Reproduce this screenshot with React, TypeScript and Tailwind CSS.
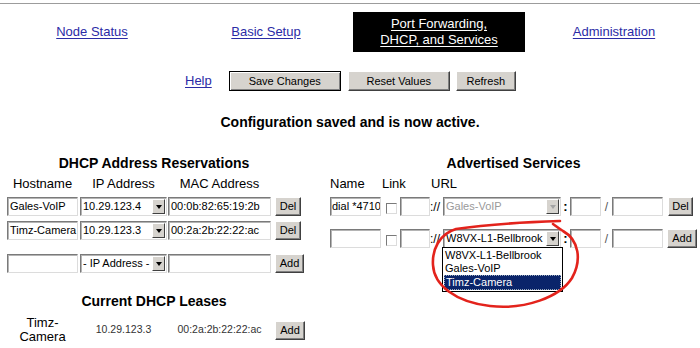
import React from 'react';

const linkCls = 'text-[#2b2ba6] underline underline-offset-[2px]';

function Button({ children, className = '', isDefault = false }: { children: React.ReactNode; className?: string; isDefault?: boolean }) {
  const edge = isDefault
    ? 'border border-black shadow-[inset_1px_1px_0_#fff,inset_-1px_-1px_0_#808080]'
    : 'border border-t-white border-l-white border-r-[#404040] border-b-[#404040] shadow-[inset_-1px_-1px_0_#808080]';
  return (
    <div className={`flex shrink-0 items-center justify-center bg-[#d6d3ce] text-[11px] leading-none text-black ${edge} ${className}`}>
      {children}
    </div>
  );
}

function TextBox({ value = '', className = '' }: { value?: string; className?: string }) {
  return (
    <div
      className={`flex h-[19px] shrink-0 items-center overflow-hidden whitespace-nowrap border border-t-[#7a7a7a] border-l-[#7a7a7a] border-r-[#dcdcdc] border-b-[#dcdcdc] bg-white px-[2px] text-[11px] leading-none text-black shadow-[inset_1px_1px_0_#b4b4b4] ${className}`}
    >
      {value}
    </div>
  );
}

function Arrow({ disabled = false }: { disabled?: boolean }) {
  return (
    <div className="flex h-[15px] w-[13px] shrink-0 items-center justify-center border border-t-white border-l-white border-r-[#404040] border-b-[#404040] bg-[#d6d3ce]">
      <div
        className={`h-0 w-0 border-x-[3.5px] border-t-[4px] border-x-transparent ${disabled ? 'border-t-[#a4a4a4]' : 'border-t-black'}`}
      />
    </div>
  );
}

function Select({
  value,
  className = '',
  disabled = false,
  children,
}: {
  value: string;
  className?: string;
  disabled?: boolean;
  children?: React.ReactNode;
}) {
  return (
    <div
      className={`relative flex h-[19px] shrink-0 items-center border border-t-[#7a7a7a] border-l-[#7a7a7a] border-r-[#dcdcdc] border-b-[#dcdcdc] bg-white pl-[2px] pr-[1px] shadow-[inset_1px_1px_0_#b4b4b4] ${className}`}
    >
      <span className={`flex-1 overflow-hidden whitespace-nowrap text-[11px] leading-none ${disabled ? 'text-[#9a9a9a]' : 'text-black'}`}>
        {value}
      </span>
      <Arrow disabled={disabled} />
      {children}
    </div>
  );
}

function CheckBox() {
  return <div className="mb-[2px] h-[11px] w-[11px] shrink-0 self-end border border-t-[#7a7a7a] border-l-[#7a7a7a] border-r-[#dcdcdc] border-b-[#dcdcdc] bg-white" />;
}

const urlOptions = ['W8VX-L1-Bellbrook', 'Gales-VoIP', 'Timz-Camera'];

export default function App() {
  return (
    <div className="relative h-[348px] w-[700px] overflow-hidden bg-white pt-[3px] font-['Liberation_Sans',Arial,sans-serif] text-black">
      <div className="h-[1px] bg-[#9c9c9c]" />

      {/* top nav */}
      <div className="ml-[5px] mt-[8px] grid h-[40px] grid-cols-[repeat(4,174px)] text-[13px] leading-[16px]">
        <div className="flex items-center justify-center">
          <a className={linkCls}>Node Status</a>
        </div>
        <div className="flex items-center justify-center">
          <a className={linkCls}>Basic Setup</a>
        </div>
        <div className="flex items-center">
          <div className="flex h-[40px] w-[172px] flex-col items-center justify-center bg-black text-center text-white">
            <span className="underline underline-offset-[2px]">Port Forwarding,</span>
            <span className="underline underline-offset-[2px]">DHCP, and Services</span>
          </div>
        </div>
        <div className="flex items-center justify-center">
          <a className={linkCls}>Administration</a>
        </div>
      </div>

      {/* action buttons */}
      <div className="ml-[185px] mt-[19px] flex h-[20px] items-center">
        <a className={`${linkCls} text-[13px]`}>Help</a>
        <Button isDefault className="ml-[17px] h-[20px] w-[112px]">Save Changes</Button>
        <Button className="ml-[7px] h-[20px] w-[102px]">Reset Values</Button>
        <Button className="ml-[6px] h-[20px] w-[60px]">Refresh</Button>
      </div>

      <p className="mt-[23px] text-center text-[14px] font-bold leading-[16px]">Configuration saved and is now active.</p>

      <div className="mt-[25px] flex">
        {/* DHCP reservations + leases */}
        <div className="ml-[7px] w-[298px]">
          <div className="pr-[4px] text-center text-[14px] font-bold leading-[16px]">DHCP Address Reservations</div>
          <div className="mt-[5px] flex text-[13px] leading-[16px]">
            <div className="mr-[2px] w-[71px] text-center">Hostname</div>
            <div className="mr-[1px] w-[87px] text-center">IP Address</div>
            <div className="w-[103px] text-center">MAC Address</div>
          </div>

          <div className="mt-[5px] flex items-center">
            <TextBox value="Gales-VoIP" className="mr-[2px] w-[71px]" />
            <Select value="10.29.123.4" className="mr-[1px] w-[87px]" />
            <TextBox value="00:0b:82:65:19:2b" className="mr-[4px] w-[103px]" />
            <Button className="h-[19px] w-[26px]">Del</Button>
          </div>
          <div className="mt-[5px] flex items-center">
            <TextBox value="Timz-Camera" className="mr-[2px] w-[71px]" />
            <Select value="10.29.123.3" className="mr-[1px] w-[87px]" />
            <TextBox value="00:2a:2b:22:22:ac" className="mr-[4px] w-[103px]" />
            <Button className="h-[19px] w-[26px]">Del</Button>
          </div>
          <div className="mt-[14px] flex items-center">
            <TextBox className="mr-[2px] w-[71px]" />
            <Select value="- IP Address -" className="mr-[1px] w-[87px]" />
            <TextBox className="mr-[4px] w-[103px]" />
            <Button className="h-[19px] w-[29px]">Add</Button>
          </div>

          <div className="mt-[20px] pr-[4px] text-center text-[14px] font-bold leading-[16px]">Current DHCP Leases</div>
          <div className="mt-[7px] flex items-center">
            <div className="flex w-[71px] flex-col items-center text-[13px] leading-[14px]">
              <span>Timz-</span>
              <span>Camera</span>
            </div>
            <div className="ml-[2px] w-[87px] text-center text-[10.5px] text-[#333]">10.29.123.3</div>
            <div className="ml-[1px] w-[103px] text-center text-[10.5px] text-[#333]">00:2a:2b:22:22:ac</div>
            <Button className="ml-[4px] h-[19px] w-[30px]">Add</Button>
          </div>
        </div>

        {/* advertised services */}
        <div className="ml-[25px] w-[367px]">
          <div className="text-center text-[14px] font-bold leading-[16px]">Advertised Services</div>
          <div className="mt-[5px] flex text-[13px] leading-[16px]">
            <div className="w-[52px]">Name</div>
            <div className="w-[49px]">Link</div>
            <div>URL</div>
          </div>

          <div className="mt-[5px] flex h-[19px] items-center">
            <TextBox value="dial *4710" className="w-[51px] !px-[1px]" />
            <div className="ml-[5px] flex h-[19px]">
              <CheckBox />
            </div>
            <TextBox className="ml-[3px] w-[30px]" />
            <span className="w-[13px] text-[12px] leading-none">://</span>
            <Select value="Gales-VoIP" disabled className="w-[118px]" />
            <span className="w-[9px] text-center text-[13px] font-bold leading-none">:</span>
            <TextBox className="w-[31px]" />
            <span className="w-[11px] text-center text-[12px] leading-none text-[#555]">/</span>
            <TextBox className="w-[51px]" />
            <Button className="ml-[5px] h-[19px] w-[25px]">Del</Button>
          </div>

          <div className="mt-[13px] flex h-[19px] items-center">
            <TextBox className="w-[51px]" />
            <div className="ml-[5px] flex h-[19px]">
              <CheckBox />
            </div>
            <TextBox className="ml-[3px] w-[30px]" />
            <span className="w-[13px] text-[12px] leading-none">://</span>
            <Select value="W8VX-L1-Bellbrook" className="w-[118px]">
              <div className="absolute left-[-2px] top-[17px] z-10 w-[121px] border border-black bg-white py-[1px] text-[11px] leading-[13px]">
                {urlOptions.map((o) => (
                  <div
                    key={o}
                    className={
                      o === 'Timz-Camera'
                        ? 'mx-[1px] border border-dotted border-[#9ab] bg-[#0a246a] px-[1px] text-white'
                        : 'px-[2px] text-black'
                    }
                  >
                    {o}
                  </div>
                ))}
              </div>
            </Select>
            <span className="w-[9px] text-center text-[13px] font-bold leading-none">:</span>
            <TextBox className="w-[31px]" />
            <span className="w-[11px] text-center text-[12px] leading-none text-[#555]">/</span>
            <TextBox className="w-[51px]" />
            <Button className="ml-[4px] h-[19px] w-[30px]">Add</Button>
          </div>
        </div>
      </div>

      {/* hand-drawn annotation */}
      <svg className="pointer-events-none absolute left-0 top-0 z-20" width="700" height="348" viewBox="0 0 700 348">
        <path
          d="M560 221 C530 222, 482 225, 456 229 C439 234, 432 250, 433 265 C434 285, 455 302, 490 306 C525 310, 560 297, 572 278 C582 260, 579 240, 563 231 C558 228, 556 226, 553 224"
          fill="none"
          stroke="#e3231c"
          strokeWidth="2.6"
          strokeLinecap="round"
          strokeLinejoin="round"
        />
      </svg>
    </div>
  );
}
